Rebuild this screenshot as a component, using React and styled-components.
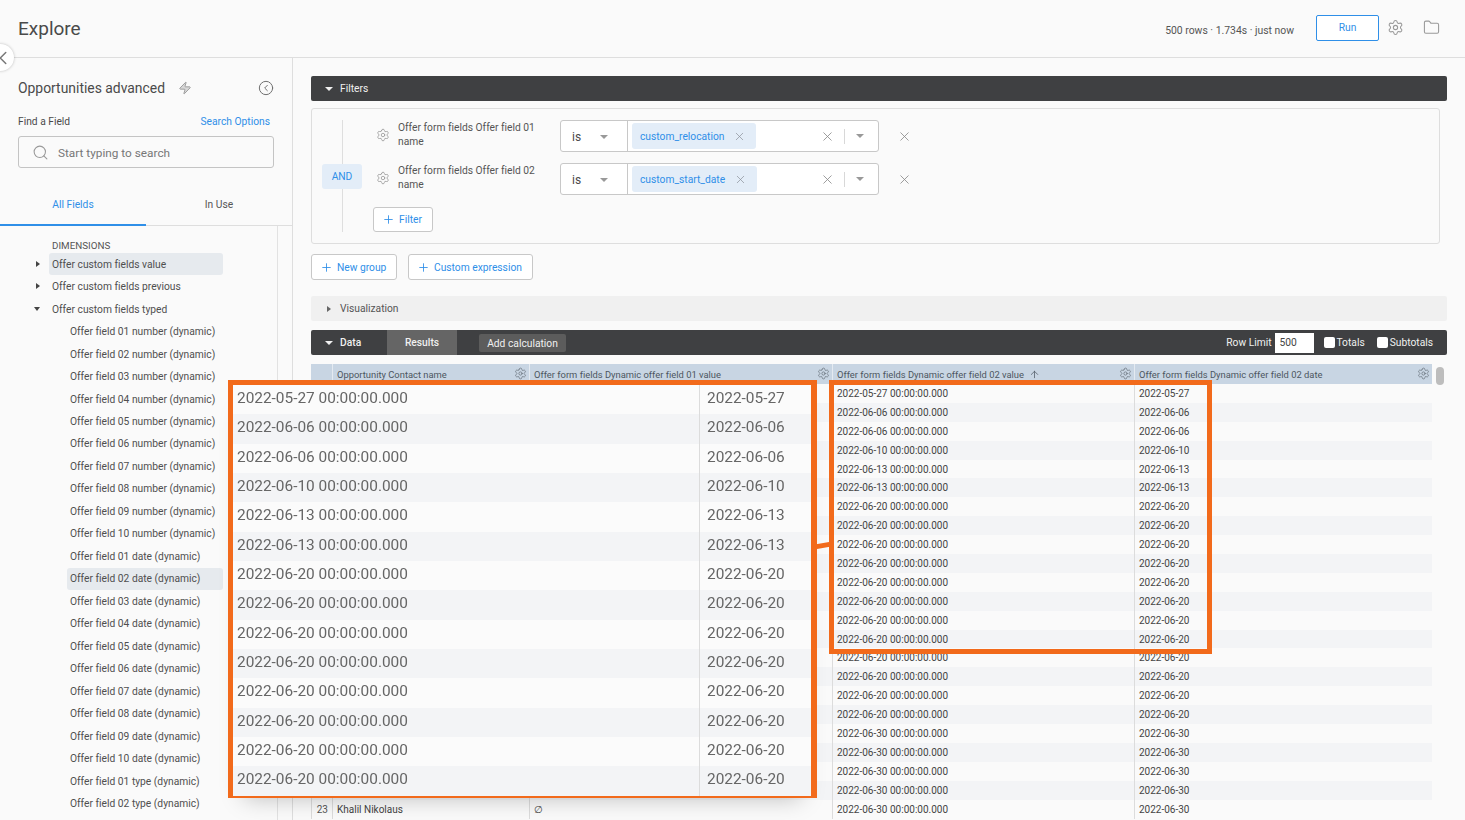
import styled, { createGlobalStyle } from 'styled-components';
import { ArrowUp, ChevronLeft, CircleChevronLeft, Folder, Plus, Search, Settings, X, Zap } from 'lucide-react';

const FONT = '"Roboto", "Noto Sans", sans-serif';

const valueDates = [
    '2022-05-27', '2022-06-06', '2022-06-06', '2022-06-10', '2022-06-13', '2022-06-13',
    '2022-06-20', '2022-06-20', '2022-06-20', '2022-06-20', '2022-06-20', '2022-06-20',
    '2022-06-20', '2022-06-20', '2022-06-20', '2022-06-20', '2022-06-20', '2022-06-20',
    '2022-06-30', '2022-06-30', '2022-06-30', '2022-06-30', '2022-06-30',
];

const numberFields = ['01', '02', '03', '04', '05', '06', '07', '08', '09', '10'];

const GlobalStyle = createGlobalStyle`
    html, body {
        margin: 0;
        padding: 0;
        height: 100%;
        overflow: hidden;
        background: #fafafa;
    }
    * {
        box-sizing: border-box;
    }
`;

const Page = styled.div`
    position: relative;
    width: 1465px;
    height: 820px;
    overflow: hidden;
    background: #fafafa;
    color: #4a4a4a;
    font-family: ${FONT};
    font-size: 10.25px;
    font-variant-ligatures: none;
`;

const Header = styled.header`
    display: flex;
    align-items: center;
    height: 58px;
    padding: 0 25px 2px 18px;
    border-bottom: 1px solid #dedede;
`;

const Title = styled.h1`
    flex: 1;
    margin: 2px 0 0;
    font-size: 19px;
    font-weight: 400;
    color: #4a4a4a;
`;

const RunInfo = styled.span`
    margin-right: 22px;
    padding-top: 5px;
    font-size: 10.4px;
    color: #555;
`;

const RunButton = styled.button`
    width: 63px;
    height: 26px;
    margin-right: 8px;
    border: 1px solid #2f8fe8;
    border-radius: 2px;
    background: #fff;
    color: #2f8fe8;
    font-family: inherit;
    font-size: 10.25px;
`;

const HeaderIcon = styled.span`
    display: flex;
    margin-left: ${(props) => props.offset || 0}px;
    color: #999;
`;

const CollapseKnob = styled.div`
    position: absolute;
    left: -13px;
    top: 44px;
    display: flex;
    align-items: center;
    justify-content: flex-end;
    width: 27px;
    height: 27px;
    border-radius: 50%;
    background: #fff;
    box-shadow: 0 0 3px rgba(0, 0, 0, .25);
    color: #777;
`;

const Body = styled.div`
    display: flex;
    height: 762px;
`;

const Sidebar = styled.aside`
    flex: none;
    width: 293px;
    border-right: 1px solid #dedede;
`;

const SidebarTop = styled.div`
    padding: 20px 18px 0;
`;

const ExploreName = styled.div`
    display: flex;
    align-items: center;
    height: 20px;
    font-size: 13.9px;
    color: #4a4a4a;
`;

const NameText = styled.span`
    margin-right: 13px;
`;

const HistoryIcon = styled.span`
    display: flex;
    margin-left: auto;
    margin-right: 0;
    color: #707070;
`;

const FindRow = styled.div`
    display: flex;
    justify-content: space-between;
    margin-top: 17px;
    padding-right: 4px;
    line-height: 14px;
`;

const LinkText = styled.span`
    color: #2f8fe8;
`;

const SearchBox = styled.div`
    display: flex;
    align-items: center;
    gap: 9px;
    width: 256px;
    height: 32px;
    margin-top: 7px;
    padding: 1px 0 0 13px;
    border: 1px solid #c4c4c4;
    border-radius: 3px;
    background: #fafafa;
    color: #777;
    font-size: 11.8px;
`;

const Tabs = styled.div`
    display: grid;
    grid-template-columns: 146px 146px;
    margin-top: 19px;
    border-bottom: 1px solid #dedede;
`;

const Tab = styled.div`
    height: 39px;
    margin-bottom: -1px;
    padding-top: 11px;
    border-bottom: 2px solid ${(props) => props.active ? '#2f8fe8' : 'transparent'};
    text-align: center;
    color: ${(props) => props.active ? '#2f8fe8' : '#555'};
`;

const FieldList = styled.div`
    width: 278px;
    height: 600px;
    padding-top: 12px;
    border-right: 1px solid #e2e2e2;
`;

const GroupLabel = styled.div`
    height: 15px;
    padding-left: 52px;
    line-height: 16px;
    font-size: 9.8px;
    color: #555;
`;

const FieldRow = styled.div`
    position: relative;
    display: flex;
    align-items: center;
    width: ${(props) => props.nested ? 156 : 174}px;
    height: 22.48px;
    margin-left: ${(props) => props.nested ? 67 : 49}px;
    padding-left: 3px;
    border-radius: 3px;
    background: ${(props) => props.selected ? '#e6eaee' : 'transparent'};
    color: #4f4f4f;
    white-space: nowrap;
`;

const RowCaret = styled.span`
    position: absolute;
    left: -13px;
    top: 8px;
    width: 0;
    height: 0;
    ${(props) => props.open
        ? 'margin-left: -2px; margin-top: 1px; border-left: 3.5px solid transparent; border-right: 3.5px solid transparent; border-top: 4px solid #444;'
        : 'border-top: 3px solid transparent; border-bottom: 3px solid transparent; border-left: 4px solid #444;'}
`;

const Main = styled.main`
    flex: 1;
    padding: 18px 18px 0;
    min-width: 0;
`;

const SectionBar = styled.div`
    display: flex;
    align-items: center;
    width: 1136px;
    height: 25px;
    padding-left: 14px;
    border-radius: 2px;
    background: ${(props) => props.light ? '#f0f0f0' : '#3f4042'};
    color: ${(props) => props.light ? '#555' : '#f0f0f0'};
`;

const BarCaret = styled.span`
    width: 0;
    height: 0;
    margin-right: 7px;
    ${(props) => props.closed
        ? 'margin-left: 2px; margin-right: 9px; border-top: 3.5px solid transparent; border-bottom: 3.5px solid transparent; border-left: 4px solid #666;'
        : 'border-left: 4px solid transparent; border-right: 4px solid transparent; border-top: 4px solid #f0f0f0;'}
`;

const FilterPanel = styled.section`
    display: flex;
    width: 1129px;
    height: 136px;
    margin-top: 7px;
    padding: 11px 10px;
    border: 1px solid #dedede;
    border-radius: 3px;
`;

const AndColumn = styled.div`
    position: relative;
    display: flex;
    align-items: center;
    flex: none;
    width: 40px;
    margin-right: 11px;

    &::before {
        content: '';
        position: absolute;
        left: 20px;
        top: 0;
        bottom: 0;
        width: 1px;
        background: #dedede;
    }
`;

const AndChip = styled.div`
    position: relative;
    width: 100%;
    height: 25px;
    border-radius: 3px;
    background: #e3edf8;
    color: #2f8fe8;
    line-height: 25px;
    text-align: center;
`;

const FilterRows = styled.div`
    display: flex;
    flex-direction: column;
    gap: 11px;
`;

const FilterRow = styled.div`
    display: flex;
    align-items: center;
    height: 32px;
`;

const GearSlot = styled.span`
    display: flex;
    width: 25px;
    margin-top: -3px;
    padding-left: 3px;
    color: #999;
`;

const FieldName = styled.div`
    width: 162px;
    padding-right: 20px;
    margin-top: -2px;
    line-height: 14.5px;
    color: #555;
`;

const FilterControl = styled.div`
    display: flex;
    width: 319px;
    height: 32px;
    border: 1px solid #c8c8c8;
    border-radius: 3px;
    background: #fff;
`;

const OperatorSelect = styled.div`
    display: flex;
    align-items: center;
    width: 67px;
    padding: 1px 19px 0 11px;
    justify-content: space-between;
    border-right: 1px solid #c8c8c8;
    font-size: 12px;
`;

const SmallCaret = styled.span`
    width: 0;
    height: 0;
    border-left: 4.5px solid transparent;
    border-right: 4.5px solid transparent;
    border-top: 4.5px solid #999;
`;

const ValueArea = styled.div`
    display: flex;
    align-items: center;
    flex: 1;
    padding: 0 14px 0 4px;
`;

const ValueChip = styled.span`
    display: flex;
    align-items: center;
    gap: 9px;
    height: 26px;
    padding: 0 10px 0 8px;
    border-radius: 3px;
    background: #e3edf8;
    color: #2f8fe8;
    font-size: 10.25px;
`;

const ClearButton = styled.span`
    display: flex;
    margin-left: auto;
    padding-right: 9px;
    border-right: 1px solid #d8d8d8;
    color: #888;
`;

const CaretSlot = styled.span`
    display: flex;
    margin-left: 11px;
`;

const RemoveButton = styled.span`
    display: flex;
    margin-left: 18px;
    color: #888;
`;

const OutlineButton = styled.button`
    display: flex;
    align-items: center;
    gap: 4px;
    width: ${(props) => props.width}px;
    height: ${(props) => props.height}px;
    padding: 0 0 0 8px;
    border: 1px solid #c8c8c8;
    border-radius: 3px;
    background: #fff;
    color: #2f8fe8;
    font-family: inherit;
    font-size: 10.25px;
`;

const AddFilterSlot = styled.div`
    margin-top: 1px;
`;

const ButtonRow = styled.div`
    display: flex;
    gap: 11px;
    margin: 10px 0 16px;
`;

const DataBar = styled(SectionBar)`
    margin-top: 9px;
    padding-right: 14px;
`;

const DataLabel = styled.span`
    width: 44px;
    font-weight: 500;
`;

const ResultsTab = styled.span`
    width: 70px;
    height: 25px;
    margin-left: 3px;
    background: #656565;
    font-weight: 500;
    line-height: 25px;
    text-align: center;
`;

const AddCalculation = styled.span`
    width: 87px;
    height: 18px;
    margin-left: 22px;
    border-radius: 2px;
    background: #5c5c5c;
    line-height: 19px;
    text-align: center;
`;

const BarRight = styled.div`
    display: flex;
    align-items: center;
    margin-left: auto;
`;

const RowLimitInput = styled.span`
    width: 39px;
    height: 20px;
    margin: 0 10px 0 3px;
    padding-left: 5px;
    background: #fff;
    color: #444;
    line-height: 20px;
`;

const CheckItem = styled.span`
    display: flex;
    align-items: center;
    gap: 2px;
    margin-right: ${(props) => props.gap || 0}px;
`;

const CheckBox = styled.span`
    width: 11px;
    height: 11px;
    border-radius: 2px;
    background: #fff;
`;

const TableWrap = styled.div`
    position: relative;
    margin-top: 9px;
    width: 1136px;
`;

const Row = styled.div`
    display: grid;
    grid-template-columns: 21px 197px 303px 302px 298px;
    width: 1121px;
`;

const HeadRow = styled(Row)`
    height: 20px;
    background: #c8d5e3;
`;

const HeadCell = styled.div`
    display: flex;
    align-items: center;
    gap: 5px;
    padding: 0 2px 0 4px;
    border-left: 1px solid ${(props) => props.first ? 'transparent' : '#e4eaf1'};
    color: #4c5560;
    font-size: 9.4px;
    white-space: nowrap;

    svg.gear {
        margin: -2px 0 0 auto;
        color: #5c6670;
    }
`;

const DataRow = styled(Row)`
    height: 18.9px;
    background: ${(props) => props.odd ? '#f3f4f6' : '#fafafa'};
`;

const DataCell = styled.div`
    padding: 1px 4px 0;
    border-left: 1px solid #dcdcdc;
    color: ${(props) => props.index ? '#555' : '#444'};
    font-size: 10px;
    line-height: 17.9px;
    text-align: ${(props) => props.index ? 'right' : 'left'};
    white-space: nowrap;
`;

const ScrollThumb = styled.div`
    position: absolute;
    left: 1125px;
    top: 3px;
    width: 8px;
    height: 18px;
    border-radius: 4px;
    background: #bdbdbd;
`;

const CalloutFrame = styled.div`
    position: absolute;
    left: ${(props) => props.left}px;
    top: ${(props) => props.top}px;
    width: ${(props) => props.width}px;
    height: ${(props) => props.height}px;
    border: 5px solid #f26a1b;
`;

const ZoomFrame = styled(CalloutFrame)`
    border-right-width: 6px;
    background: #fafafa;
    box-shadow: 0 16px 22px -16px rgba(0, 0, 0, .25);
`;

const ZoomRow = styled.div`
    display: grid;
    grid-template-columns: 466px 1fr;
    height: 29.35px;
    background: ${(props) => props.odd ? '#f3f4f6' : '#fbfbfb'};
    color: #666;
    font-size: 15.4px;
    line-height: 27.5px;
    overflow: hidden;
`;

const ZoomCell = styled.div`
    padding-left: ${(props) => props.second ? 7 : 4}px;
    border-left: ${(props) => props.second ? '1px solid #dcdcdc' : 'none'};
    filter: blur(.6px);
    white-space: nowrap;
`;

const Connector = styled.div`
    position: absolute;
    left: 815px;
    top: 543px;
    width: 16px;
    height: 5px;
    background: #f26a1b;
    transform: rotate(-10deg);
`;

const App = () => {
    return (
        <Page>
            <GlobalStyle />
            <Header>
                <Title>Explore</Title>
                <RunInfo>500 rows · 1.734s · just now</RunInfo>
                <RunButton>Run</RunButton>
                <HeaderIcon><Settings size={17} strokeWidth={1.5} /></HeaderIcon>
                <HeaderIcon offset={19}><Folder size={17} strokeWidth={1.5} /></HeaderIcon>
            </Header>
            <CollapseKnob><ChevronLeft size={22} strokeWidth={1.6} /></CollapseKnob>
            <Body>
                <Sidebar>
                    <SidebarTop>
                        <ExploreName>
                            <NameText>Opportunities advanced</NameText>
                            <Zap size={14} strokeWidth={1.6} color="#999" fill="#d8d8d8" />
                            <HistoryIcon><CircleChevronLeft size={16} strokeWidth={1.5} /></HistoryIcon>
                        </ExploreName>
                        <FindRow>
                            <span>Find a Field</span>
                            <LinkText>Search Options</LinkText>
                        </FindRow>
                        <SearchBox>
                            <Search size={17} strokeWidth={1.5} color="#999" />
                            <span>Start typing to search</span>
                        </SearchBox>
                    </SidebarTop>
                    <Tabs>
                        <Tab active>All Fields</Tab>
                        <Tab>In Use</Tab>
                    </Tabs>
                    <FieldList>
                        <GroupLabel>DIMENSIONS</GroupLabel>
                        <FieldRow selected><RowCaret />Offer custom fields value</FieldRow>
                        <FieldRow><RowCaret />Offer custom fields previous</FieldRow>
                        <FieldRow><RowCaret open />Offer custom fields typed</FieldRow>
                        {numberFields.map((num) => (
                            <FieldRow nested key={`number-${num}`}>Offer field {num} number (dynamic)</FieldRow>
                        ))}
                        {numberFields.map((num) => (
                            <FieldRow nested selected={num === '02'} key={`date-${num}`}>Offer field {num} date (dynamic)</FieldRow>
                        ))}
                        {numberFields.slice(0, 2).map((num) => (
                            <FieldRow nested key={`type-${num}`}>Offer field {num} type (dynamic)</FieldRow>
                        ))}
                    </FieldList>
                </Sidebar>
                <Main>
                    <SectionBar>
                        <BarCaret />
                        <span>Filters</span>
                    </SectionBar>
                    <FilterPanel>
                        <AndColumn><AndChip>AND</AndChip></AndColumn>
                        <FilterRows>
                            <FilterRow>
                                <GearSlot><Settings size={14} strokeWidth={1.4} /></GearSlot>
                                <FieldName>Offer form fields Offer field 01 name</FieldName>
                                <FilterControl>
                                    <OperatorSelect>is<SmallCaret /></OperatorSelect>
                                    <ValueArea>
                                        <ValueChip>custom_relocation<X size={13} strokeWidth={1.3} color="#8a9099" /></ValueChip>
                                        <ClearButton><X size={15} strokeWidth={1.3} /></ClearButton>
                                        <CaretSlot><SmallCaret /></CaretSlot>
                                    </ValueArea>
                                </FilterControl>
                                <RemoveButton><X size={15} strokeWidth={1.3} /></RemoveButton>
                            </FilterRow>
                            <FilterRow>
                                <GearSlot><Settings size={14} strokeWidth={1.4} /></GearSlot>
                                <FieldName>Offer form fields Offer field 02 name</FieldName>
                                <FilterControl>
                                    <OperatorSelect>is<SmallCaret /></OperatorSelect>
                                    <ValueArea>
                                        <ValueChip>custom_start_date<X size={13} strokeWidth={1.3} color="#8a9099" /></ValueChip>
                                        <ClearButton><X size={15} strokeWidth={1.3} /></ClearButton>
                                        <CaretSlot><SmallCaret /></CaretSlot>
                                    </ValueArea>
                                </FilterControl>
                                <RemoveButton><X size={15} strokeWidth={1.3} /></RemoveButton>
                            </FilterRow>
                            <AddFilterSlot>
                                <OutlineButton width={60} height={25}><Plus size={13} strokeWidth={1.6} />Filter</OutlineButton>
                            </AddFilterSlot>
                        </FilterRows>
                    </FilterPanel>
                    <ButtonRow>
                        <OutlineButton width={86} height={26}><Plus size={13} strokeWidth={1.6} />New group</OutlineButton>
                        <OutlineButton width={125} height={26}><Plus size={13} strokeWidth={1.6} />Custom expression</OutlineButton>
                    </ButtonRow>
                    <SectionBar light>
                        <BarCaret closed />
                        <span>Visualization</span>
                    </SectionBar>
                    <DataBar>
                        <BarCaret />
                        <DataLabel>Data</DataLabel>
                        <ResultsTab>Results</ResultsTab>
                        <AddCalculation>Add calculation</AddCalculation>
                        <BarRight>
                            <span>Row Limit</span>
                            <RowLimitInput>500</RowLimitInput>
                            <CheckItem gap={12}><CheckBox />Totals</CheckItem>
                            <CheckItem><CheckBox />Subtotals</CheckItem>
                        </BarRight>
                    </DataBar>
                    <TableWrap>
                        <HeadRow>
                            <HeadCell first />
                            <HeadCell>Opportunity Contact name<Settings className="gear" size={13} strokeWidth={1.2} /></HeadCell>
                            <HeadCell>Offer form fields Dynamic offer field 01 value<Settings className="gear" size={13} strokeWidth={1.2} /></HeadCell>
                            <HeadCell>Offer form fields Dynamic offer field 02 value<ArrowUp size={11} strokeWidth={1.6} /><Settings className="gear" size={13} strokeWidth={1.2} /></HeadCell>
                            <HeadCell>Offer form fields Dynamic offer field 02 date<Settings className="gear" size={13} strokeWidth={1.2} /></HeadCell>
                        </HeadRow>
                        {valueDates.map((date, idx) => (
                            <DataRow odd={idx % 2 === 1} key={idx}>
                                <DataCell index>{idx === 22 ? 23 : ''}</DataCell>
                                <DataCell>{idx === 22 ? 'Khalil Nikolaus' : ''}</DataCell>
                                <DataCell>{idx === 22 ? '∅' : ''}</DataCell>
                                <DataCell>{date} 00:00:00.000</DataCell>
                                <DataCell>{date}</DataCell>
                            </DataRow>
                        ))}
                        <ScrollThumb />
                    </TableWrap>
                </Main>
            </Body>
            <ZoomFrame left={228} top={380} width={589} height={418}>
                {valueDates.slice(0, 14).map((date, idx) => (
                    <ZoomRow odd={idx % 2 === 1} key={idx}>
                        <ZoomCell>{date} 00:00:00.000</ZoomCell>
                        <ZoomCell second>{date}</ZoomCell>
                    </ZoomRow>
                ))}
            </ZoomFrame>
            <CalloutFrame left={829} top={380} width={383} height={274} />
            <Connector />
        </Page>
    );
};

export default App;
